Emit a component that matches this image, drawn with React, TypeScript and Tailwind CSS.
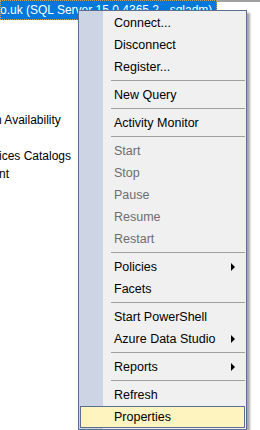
import React from "react";

type Item =
  | { type: "sep" }
  | { type: "item"; label: string; disabled?: boolean; sub?: boolean; hot?: boolean };

const items: Item[] = [
  { type: "item", label: "Connect..." },
  { type: "item", label: "Disconnect" },
  { type: "item", label: "Register..." },
  { type: "sep" },
  { type: "item", label: "New Query" },
  { type: "sep" },
  { type: "item", label: "Activity Monitor" },
  { type: "sep" },
  { type: "item", label: "Start", disabled: true },
  { type: "item", label: "Stop", disabled: true },
  { type: "item", label: "Pause", disabled: true },
  { type: "item", label: "Resume", disabled: true },
  { type: "item", label: "Restart", disabled: true },
  { type: "sep" },
  { type: "item", label: "Policies", sub: true },
  { type: "item", label: "Facets" },
  { type: "sep" },
  { type: "item", label: "Start PowerShell" },
  { type: "item", label: "Azure Data Studio", sub: true },
  { type: "sep" },
  { type: "item", label: "Reports", sub: true },
  { type: "sep" },
  { type: "item", label: "Refresh" },
  { type: "item", label: "Properties", hot: true },
];

function Arrow() {
  return (
    <span className="ml-auto mr-[10px] w-0 h-0 border-l-[4px] border-l-black border-y-[4px] border-y-transparent" />
  );
}

export default function App() {
  return (
    <div
      className="relative w-[260px] h-[430px] bg-white overflow-hidden text-[12px] text-black"
      style={{ fontFamily: '"Liberation Sans", Arial, sans-serif' }}
    >
      <div className="flex h-[20px]">
        <div className="w-[217px] h-[20px] bg-[#0078d7] border border-dotted border-[#c8a060] text-white leading-[18px] whitespace-nowrap overflow-hidden">
          <span className="-ml-[1px]">o.uk (SQL Server 15.0.4365.2 - sqladm)</span>
        </div>
        <div className="flex-1 h-[2px] bg-[#a0a0a0]" />
      </div>
      <div className="pt-[91px] flex flex-col whitespace-nowrap">
        <div className="h-[18px] leading-[18px] -ml-[5px]">h Availability</div>
        <div className="h-[18px]" />
        <div className="h-[18px] leading-[18px] -ml-[1px]">ices Catalogs</div>
        <div className="h-[18px] leading-[18px] -ml-[1px]">nt</div>
      </div>

      <div className="absolute left-[78px] top-[10px] w-[169px] border border-[#5b6e8f] p-px bg-[linear-gradient(to_right,#cdd5e4_0px,#cdd5e4_24px,#f0f0f0_24px)] shadow-[3px_3px_2px_rgba(0,0,0,0.35)] text-[12.5px]">
        {items.map((it, i) =>
          it.type === "sep" ? (
            <div key={i} className="h-[6px] pt-[2px] ml-[31px]">
              <div className="h-px bg-[#a0a0a0]" />
            </div>
          ) : it.hot ? (
            <div
              key={i}
              className="h-[22px] flex items-center pl-[33px] border border-[#5b6e8f] bg-[#fdf4bf]"
            >
              {it.label}
            </div>
          ) : (
            <div
              key={i}
              className={
                "h-[22px] flex items-center pl-[34px] " +
                (it.disabled ? "text-[#6d6d6d]" : "text-black")
              }
            >
              {it.label}
              {it.sub ? <Arrow /> : null}
            </div>
          )
        )}
      </div>
    </div>
  );
}
